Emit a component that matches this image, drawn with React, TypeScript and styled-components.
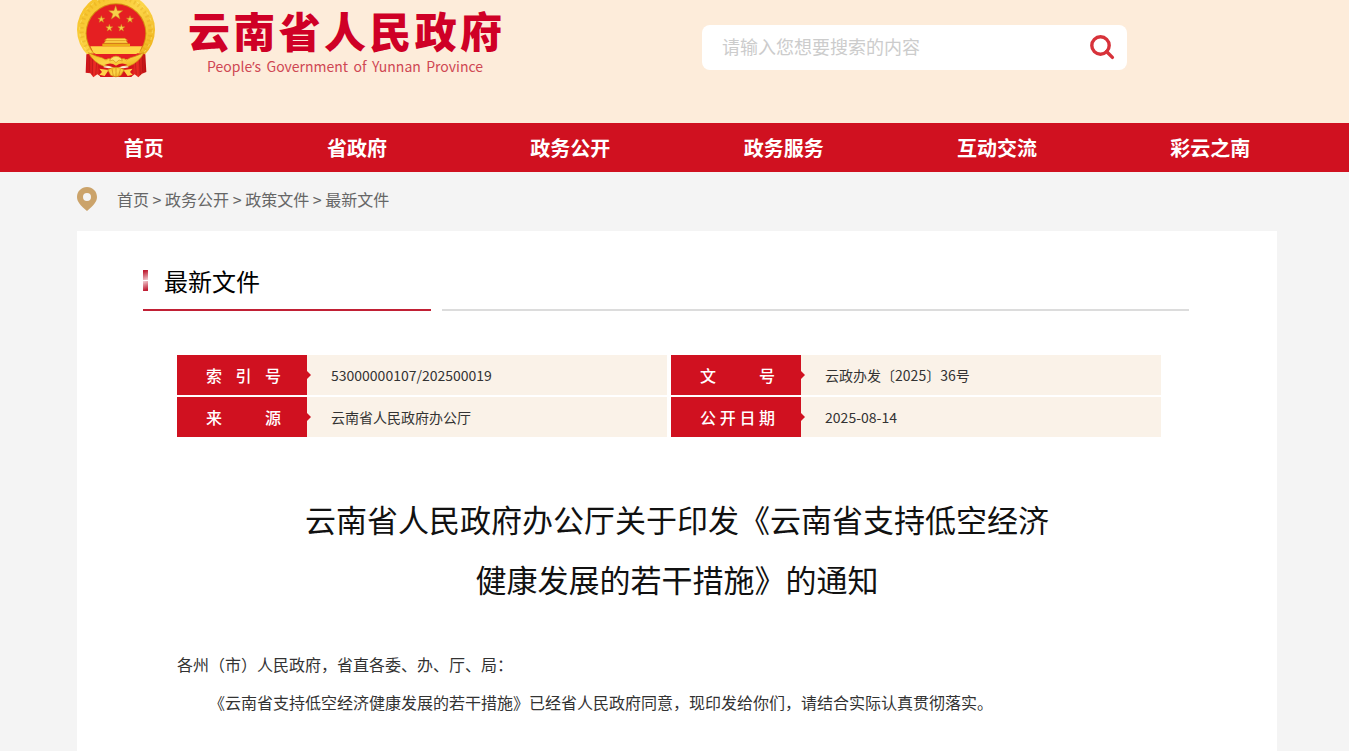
import React from "react";
import styled, { createGlobalStyle } from "styled-components";

const GlobalStyle = createGlobalStyle`
  * { box-sizing: border-box; }
  body {
    margin: 0;
    background: #f4f4f4;
    color: #333;
    font-family: "Noto Sans CJK SC", "Noto Sans", sans-serif;
  }
  a { color: inherit; text-decoration: none; }
`;

const Header = styled.header`
  height: 123px;
  padding-left: 5px;
  background: #fdecda;
`;

const Container = styled.div`
  width: 100%;
  max-width: 1200px;
  margin: 0 auto;
`;

const HeaderInner = styled(Container)`
  display: flex;
  justify-content: space-between;
  padding-right: 150px;
`;

const Brand = styled.a`
  display: flex;
  gap: 31px;
`;

const Emblem = styled.svg`
  display: block;
  width: 80px;
  height: 80px;
  flex: none;
`;

const BrandText = styled.div`
  display: flex;
  flex-direction: column;
  align-items: center;
  padding-top: 4px;
`;

const BrandName = styled.h1`
  display: flex;
  justify-content: space-between;
  width: 314px;
  margin: 0;
  color: #cf0026;
  font-size: 42px;
  font-weight: 900;
  line-height: 52px;
  white-space: nowrap;
`;

const BrandSub = styled.p`
  width: 276px;
  margin: 0;
  color: #cf4753;
  font-size: 14px;
  line-height: 20px;
  white-space: nowrap;
  text-align-last: justify;
`;

const Apostrophe = styled.span`
  font-family: "Noto Sans", sans-serif;
`;

const Search = styled.form`
  display: flex;
  align-items: center;
  width: 425px;
  height: 45px;
  margin-top: 25px;
  padding: 0 12px 2px 20px;
  border-radius: 8px;
  background: #fff;
`;

const SearchInput = styled.input`
  flex: 1;
  min-width: 0;
  height: 40px;
  padding: 0 0 2px;
  border: 0;
  outline: 0;
  background: transparent;
  color: #333;
  font-family: inherit;
  font-size: 18px;
  &::placeholder { color: #ccc; opacity: 1; }
`;

const SearchButton = styled.button`
  width: 26px;
  height: 26px;
  padding: 0;
  border: 0;
  background: transparent;
  cursor: pointer;
  svg { display: block; }
`;

const Nav = styled.nav`
  padding-left: 5px;
  background: #d01120;
`;

const NavList = styled.ul`
  display: grid;
  grid-template-columns: repeat(6, 1fr);
  max-width: 1280px;
  margin: 0 auto;
  padding: 0;
  list-style: none;
`;

const NavLink = styled.a`
  display: block;
  color: #fff;
  font-size: 20px;
  font-weight: 700;
  line-height: 49px;
  text-align: center;
`;

const Main = styled.main`
  padding-left: 5px;
`;

const Breadcrumb = styled.nav`
  display: flex;
  align-items: center;
  gap: 20px;
  height: 59px;
  padding-bottom: 6px;
  color: #666;
  font-size: 16px;
`;

const Card = styled.section`
  min-height: 520px;
  padding: 34px 88px 20px 66px;
  background: #fff;
`;

const SectionHead = styled.div`
  display: grid;
  grid-template-columns: 288px 1fr;
  column-gap: 11px;
`;

const SectionTitle = styled.h2`
  display: flex;
  align-items: center;
  gap: 16px;
  height: 46px;
  margin: 0;
  padding-bottom: 14px;
  border-bottom: 2px solid #c12035;
  color: #000;
  font-size: 24px;
  font-weight: 400;
`;

const TitleMark = styled.span`
  display: grid;
  grid-template-rows: 10px 10px;
  gap: 1px;
  width: 5px;
  i:first-child { background: linear-gradient(160deg, #c01f35 15%, #f3d3d7); }
  i:last-child { background: linear-gradient(160deg, #f3d3d7, #c01f35 85%); }
`;

const SectionRule = styled.div`
  border-bottom: 2px solid #dcdcdc;
`;

const Article = styled.article`
  padding: 0 28px 0 34px;
`;

const InfoTable = styled.table`
  width: 100%;
  margin-top: 44px;
  border-collapse: separate;
  border-spacing: 0;
  table-layout: fixed;
`;

const Col = styled.col<{ $width?: string }>`
  width: ${(p) => p.$width ?? "auto"};
`;

const InfoLabel = styled.th`
  position: relative;
  height: 42px;
  padding: 0 26px 0 29px;
  border-bottom: 2px solid #fff;
  background: #d01120;
  background-clip: padding-box;
  color: #fff;
  font-size: 16px;
  font-weight: 500;
  line-height: 40px;
  &::after {
    content: "";
    position: absolute;
    top: 16px;
    left: 100%;
    border: 4px solid transparent;
    border-left-color: #d01120;
    border-right-width: 0;
  }
`;

const LabelText = styled.span`
  display: flex;
  justify-content: space-between;
`;

const InfoValue = styled.td<{ $gap?: boolean }>`
  padding: 0 24px;
  border-bottom: 2px solid #fff;
  border-right: ${(p) => (p.$gap ? "4px solid #fff" : "0")};
  background: #faf2e8;
  background-clip: padding-box;
  font-size: 14px;
  line-height: 40px;
`;

const DocTitle = styled.h3`
  margin: 50px -16px 0 0;
  color: #111;
  font-size: 31px;
  font-weight: 400;
  line-height: 60px;
  text-align: center;
`;

const DocBody = styled.div`
  margin-top: 36px;
`;

const Paragraph = styled.p<{ $indent?: boolean }>`
  margin: 0;
  font-size: 16px;
  line-height: 38px;
  text-indent: ${(p) => (p.$indent ? "2em" : "0")};
`;

const star = (cx: number, cy: number, r: number) =>
  Array.from({ length: 10 }, (_, i) => {
    const rad = i % 2 ? r * 0.4 : r;
    const a = (Math.PI / 5) * i - Math.PI / 2;
    return `${cx + rad * Math.cos(a)},${cy + rad * Math.sin(a)}`;
  }).join(" ");

const NationalEmblem = () => (
  <Emblem viewBox="21 0 240 240" aria-hidden="true">
    <defs>
      <linearGradient id="gold" x1="0" y1="0" x2="1" y2="1">
        <stop offset="0" stopColor="#f5bd20" />
        <stop offset="0.5" stopColor="#fcd548" />
        <stop offset="1" stopColor="#eba910" />
      </linearGradient>
      <linearGradient id="drape" x1="0" x2="1">
        <stop offset="0" stopColor="#c91018" />
        <stop offset="0.5" stopColor="#ec2d25" />
        <stop offset="1" stopColor="#b90d12" />
      </linearGradient>
    </defs>
    <ellipse cx="138" cy="89" rx="117" ry="112" fill="url(#gold)" />
    <ellipse cx="138" cy="91" rx="103" ry="99" fill="none" stroke="#d99a14" strokeWidth="12" strokeDasharray="5 9" opacity="0.3" />
    <ellipse cx="138" cy="91" rx="109" ry="104" fill="none" stroke="#fff08b" strokeWidth="3" strokeDasharray="9 12" opacity="0.5" />
    <ellipse cx="138" cy="100" rx="91" ry="90" fill="#d78c11" />
    <ellipse cx="138" cy="100" rx="88" ry="87" fill="#e51f22" />
    <path d="M61 139H216L207 158Q195 177 176 187H99Q76 174 61 139Z" fill="#ffd64a" />
    <path d="M64 162H213L196 178H80Z" fill="#e51f22" />
    <path d="M97 139V131H180V139Z" fill="#edb018" />
    <path d="M101 130L108 121H103L112 115H164L173 121H168L174 130Z" fill="#ffd64a" stroke="#cf7c13" strokeWidth="1.5" />
    <path d="M108 122H167M104 130H172" stroke="#d18317" strokeWidth="2" />
    <path d="M49 163L75 160Q88 178 104 188L94 231L82 223L70 232L61 220L47 218Z" fill="url(#drape)" />
    <path d="M226 163L201 160Q188 178 172 188L183 231L194 223L205 232L216 221L229 216Z" fill="url(#drape)" />
    <path d="M58 170V216M68 175L67 225M80 181L77 225M218 170V216M208 175L211 225M196 181L199 225" stroke="#980e12" strokeWidth="3" opacity="0.4" />
    <path d="M84 196Q108 210 138 201Q169 210 192 196L184 231H91Z" fill="#d7141b" />
    <path d="M55 158Q66 163 80 169Q98 172 108 180Q115 173 122 177Q138 159 154 177Q162 173 169 180Q180 172 196 169Q210 163 222 158Q208 186 176 199Q157 192 138 201Q119 192 101 199Q70 186 55 158Z" fill="url(#gold)" stroke="#d28c14" strokeWidth="2" />
    <path d="M119 183Q122 170 138 169Q154 170 157 183L147 180L138 188L129 180Z" fill="#ffe16a" stroke="#d38c16" strokeWidth="2" />
    <path d="M104 195Q122 185 138 197Q155 185 173 195Q155 197 138 205Q121 197 104 195Z" fill="#d7141b" />
    <path d="M88 206L116 210L104 228L88 224L96 216ZM188 206L160 210L173 228L188 224L180 216Z" fill="#ffd249" />
    <path d="M113 209Q138 195 163 209L153 226Q138 235 122 226Z" fill="url(#gold)" stroke="#cb8113" strokeWidth="2" />
    <path d="M126 207L130 228M138 203V229M151 207L146 228" stroke="#cf8918" strokeWidth="2" />
    <g fill="#f6cf4a" stroke="#cf8b1b" strokeWidth="1.5">
      <polygon points={star(137, 39, 22)} />
      <polygon points={star(94, 58, 11)} />
      <polygon points={star(180, 58, 11)} />
      <polygon points={star(118, 84, 11)} />
      <polygon points={star(154, 84, 11)} />
    </g>
  </Emblem>
);

const Spread = ({ text }: { text: string }) => (
  <>
    {Array.from(text).map((ch, i) => (
      <span key={i}>{ch}</span>
    ))}
  </>
);

const navItems = ["首页", "省政府", "政务公开", "政务服务", "互动交流", "彩云之南"];
const crumbs = ["首页", "政务公开", "政策文件", "最新文件"];
const info = [
  [["索引号", "53000000107/202500019"], ["文号", "云政办发〔2025〕36号"]],
  [["来源", "云南省人民政府办公厅"], ["公开日期", "2025-08-14"]],
];

export default function App() {
  return (
    <>
      <GlobalStyle />
      <Header>
        <HeaderInner>
          <Brand href="#">
            <NationalEmblem />
            <BrandText>
              <BrandName><Spread text="云南省人民政府" /></BrandName>
              <BrandSub>
                People<Apostrophe>’</Apostrophe>s Government of Yunnan Province
              </BrandSub>
            </BrandText>
          </Brand>
          <Search role="search" onSubmit={(e) => e.preventDefault()}>
            <SearchInput type="text" aria-label="搜索" placeholder="请输入您想要搜索的内容" />
            <SearchButton type="submit" aria-label="搜索">
              <svg width="26" height="26" viewBox="0 0 26 26" fill="none" stroke="#d7323a">
                <circle cx="11.5" cy="11.5" r="8.7" strokeWidth="3.4" />
                <path d="M17.5 17.5L23.4 23.4" strokeWidth="3.4" strokeLinecap="round" />
              </svg>
            </SearchButton>
          </Search>
        </HeaderInner>
      </Header>
      <Nav>
        <NavList>
          {navItems.map((item) => (
            <li key={item}><NavLink href="#">{item}</NavLink></li>
          ))}
        </NavList>
      </Nav>
      <Main>
        <Container>
          <Breadcrumb>
            <svg width="20" height="24" viewBox="0 0 20 24" aria-hidden="true">
              <path fillRule="evenodd" fill="#cba36a" d="M10 0C4.4 0 0 4.4 0 10C0 14.8 3.6 18.5 10 24C16.4 18.5 20 14.8 20 10C20 4.4 15.6 0 10 0ZM10 6A4 4 0 1 1 10 14A4 4 0 1 1 10 6Z" />
            </svg>
            <span>
              {crumbs.map((c, i) => (
                <React.Fragment key={c}>
                  {i > 0 && " > "}
                  <a href="#">{c}</a>
                </React.Fragment>
              ))}
            </span>
          </Breadcrumb>
          <Card>
            <SectionHead>
              <SectionTitle>
                <TitleMark><i /><i /></TitleMark>
                最新文件
              </SectionTitle>
              <SectionRule />
            </SectionHead>
            <Article>
              <InfoTable>
                <colgroup>
                  <Col $width="130px" />
                  <Col $width="37%" />
                  <Col $width="130px" />
                  <Col />
                </colgroup>
                <tbody>
                  {info.map((row, r) => (
                    <tr key={r}>
                      {row.map(([label, value], i) => (
                        <React.Fragment key={label}>
                          <InfoLabel scope="row"><LabelText><Spread text={label} /></LabelText></InfoLabel>
                          <InfoValue $gap={i === 0}>{value}</InfoValue>
                        </React.Fragment>
                      ))}
                    </tr>
                  ))}
                </tbody>
              </InfoTable>
              <DocTitle>
                云南省人民政府办公厅关于印发《云南省支持低空经济
                <br />
                健康发展的若干措施》的通知
              </DocTitle>
              <DocBody>
                <Paragraph>各州（市）人民政府，省直各委、办、厅、局：</Paragraph>
                <Paragraph $indent>
                  《云南省支持低空经济健康发展的若干措施》已经省人民政府同意，现印发给你们，请结合实际认真贯彻落实。
                </Paragraph>
              </DocBody>
            </Article>
          </Card>
        </Container>
      </Main>
    </>
  );
}
